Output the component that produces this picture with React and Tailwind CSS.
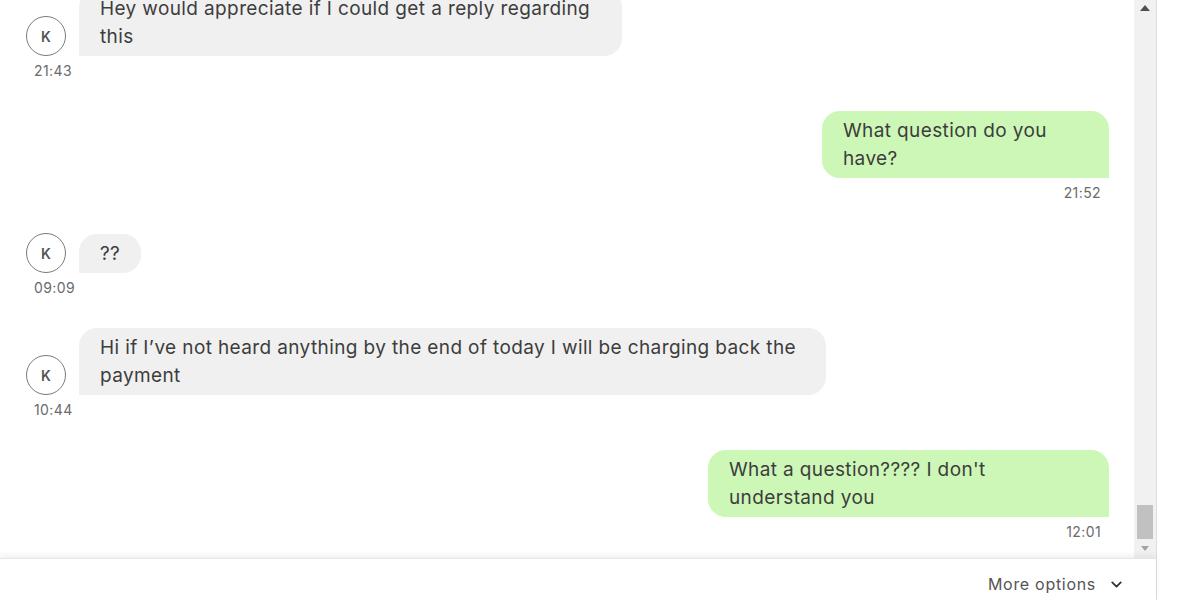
import React from 'react';
import { ChevronDown } from 'lucide-react';

const messages = [
  { id: 1, from: 'them', lines: ['Hey would appreciate if I could get a reply regarding', 'this'], time: '21:43', width: 'w-[543px]' },
  { id: 2, from: 'me', lines: ['What question do you', 'have?'], time: '21:52', width: 'w-[287px]' },
  { id: 3, from: 'them', lines: ['??'], time: '09:09', width: '' },
  { id: 4, from: 'them', lines: ['Hi if I\u2019ve not heard anything by the end of today I will be charging back the', 'payment'], time: '10:44', width: 'w-[747px]' },
  { id: 5, from: 'me', lines: ["What a question???? I don't", 'understand you'], time: '12:01', width: 'w-[401px]' },
];

function Bubble({ m }) {
  const mine = m.from === 'me';
  return (
    <div
      className={`${m.width} px-[21px] py-[5.5px] text-[19px] tracking-[0.38px] leading-[28px] text-[#3d3d3d] whitespace-nowrap ${
        mine ? 'bg-[#cdf7b7] rounded-[18px] rounded-br-none' : 'bg-[#f0f0f0] rounded-[18px] rounded-bl-none'
      }`}
    >
      {m.lines.map((l, i) => (
        <div key={i}>{l}</div>
      ))}
    </div>
  );
}

function Message({ m }) {
  if (m.from === 'me') {
    return (
      <div className="flex flex-col items-end pr-[25px]">
        <Bubble m={m} />
        <div className="mt-[5px] pr-2 text-[14px] tracking-[0.4px] leading-5 text-[#6b6b6b]">{m.time}</div>
      </div>
    );
  }
  return (
    <div className="flex flex-col">
      <div className="flex items-end gap-[13px] pl-[26px]">
        <div className="w-10 h-10 shrink-0 rounded-full border-[1.5px] border-[#7a7a7a] bg-white flex items-center justify-center text-[14px] font-semibold text-[#555]">
          K
        </div>
        <Bubble m={m} />
      </div>
      <div className="mt-[5px] pl-[34px] text-[14px] tracking-[0.4px] leading-5 text-[#6b6b6b]">{m.time}</div>
    </div>
  );
}

export default function App() {
  return (
    <div className="w-[1177px] h-[600px] bg-white flex overflow-hidden" style={{ fontFamily: 'Inter, "Noto Sans", sans-serif' }}>
      <div className="w-[1157px] h-full flex flex-col border-r border-[#dedede]">
        <div className="flex-1 flex min-h-0">
          <div className="flex-1 flex flex-col justify-end overflow-hidden pb-[16px] gap-[30px]">
            {messages.map((m) => (
              <Message key={m.id} m={m} />
            ))}
          </div>
          {/* scrollbar */}
          <div className="w-[22px] bg-[#f1f1f1] flex flex-col items-center justify-between pt-[5px] pb-[7px]">
            <div className="w-0 h-0 border-l-[5px] border-r-[5px] border-b-[6px] border-l-transparent border-r-transparent border-b-[#505050]" />
            <div className="flex flex-col items-center gap-[7px]">
              <div className="w-[16px] h-[34px] bg-[#c1c1c1]" />
              <div className="w-0 h-0 border-l-[4px] border-r-[4px] border-t-[5px] border-l-transparent border-r-transparent border-t-[#a3a3a3]" />
            </div>
          </div>
        </div>
        <div className="h-[42px] shrink-0 border-t border-[#e6e6e6] shadow-[0_-3px_6px_rgba(0,0,0,0.06)] flex items-center justify-end pt-[9px] pr-[31px] gap-3 text-[16px] tracking-[0.7px] text-[#555]">
          <span>More options</span>
          <ChevronDown size={17} strokeWidth={2.6} className="text-[#333]" />
        </div>
      </div>
    </div>
  );
}
